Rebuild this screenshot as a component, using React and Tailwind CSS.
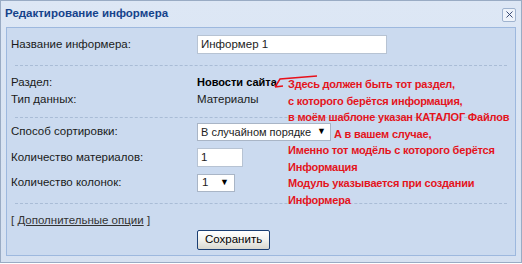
import { X } from "lucide-react";

const font = "font-['Tahoma','Liberation_Sans',sans-serif]";

const Dash = ({ className = "" }) => (
  <div className={`border-t border-dashed border-[#a9bcd6] mx-[4px] ${className}`} />
);

const Label = ({ children }) => (
  <div className="w-[186px] shrink-0 text-[11.5px] leading-none text-[#1a1a1a]">{children}</div>
);

const notes = [
  "Здесь должен быть тот раздел,",
  "с которого берётся информация,",
  "в моём шаблоне указан КАТАЛОГ Файлов",
  "",
  "Именно тот модёль с которого берётся",
  "Информация",
  "Модуль указывается при создании",
  "Информера",
];

export default function App() {
  return (
    <div className={`w-[522px] h-[263px] bg-white ${font}`}>
      <div className="h-[263px] border border-[#99abc4] bg-gradient-to-b from-[#dde7f5] via-[#d9e4f3] to-[#d6e1f1] flex flex-col">
        {/* header */}
        <div className="h-[26px] flex items-center justify-between pl-[4px] pr-[5px] pb-[1px]">
          <span className="text-[11.5px] font-bold text-[#15428b]">Редактирование информера</span>
          <span className="w-[14px] h-[14px] mt-[2px] rounded-[2px] border border-[#9fb3cf] bg-[#eef3fa] flex items-center justify-center">
            <X size={11} strokeWidth={2} className="text-[#2a3d6b]" />
          </span>
        </div>

        {/* panel */}
        <div className="relative mx-[5px] border border-[#9db8de] bg-[#cbdaef] pt-[7px] pb-[5px] px-[4px]">
          <div className="flex items-center h-[19px]">
            <Label>Название информера:</Label>
            <div className="w-[190px] h-[19px] bg-white border border-[#b7c3d3] px-[3px] text-[11.5px] flex items-center text-[#222]">
              Информер 1
            </div>
          </div>

          <Dash className="mt-[11px]" />

          <div className="mt-[8px] text-[11.5px] leading-[17px] text-[#1a1a1a]">
            <div className="flex h-[17px] items-center">
              <Label>Раздел:</Label>
              <span className="font-bold text-[11px] text-black">Новости сайта</span>
            </div>
            <div className="flex h-[17px] items-center">
              <Label>Тип данных:</Label>
              <span>Материалы</span>
            </div>
          </div>

          <Dash className="mt-[9px]" />

          <div className="mt-[5px] flex items-center h-[18px]">
            <Label>Способ сортировки:</Label>
            <div className="w-[134px] h-[18px] bg-white border border-[#a9b5c6] pl-[3px] pr-[4px] text-[11px] whitespace-nowrap flex items-center justify-between text-[#222]">
              <span>В случайном порядке</span>
              <span className="text-[9px] text-black">▼</span>
            </div>
          </div>
          <div className="mt-[7px] flex items-center h-[19px]">
            <Label>Количество материалов:</Label>
            <div className="w-[46px] h-[19px] bg-white border border-[#b7c3d3] px-[3px] text-[11.5px] flex items-center text-[#222]">
              1
            </div>
          </div>
          <div className="mt-[7px] flex items-center h-[18px]">
            <Label>Количество колонок:</Label>
            <div className="w-[38px] h-[18px] bg-white border border-[#a9b5c6] pl-[4px] pr-[5px] text-[11.5px] flex items-center justify-between text-[#222]">
              <span>1</span>
              <span className="text-[9px] text-black">▼</span>
            </div>
          </div>

          <Dash className="mt-[11px]" />

          <div className="mt-[9px] h-[14px] text-[11.5px] leading-[14px] text-[#333]">
            [ <span className="underline">Дополнительные опции</span> ]
          </div>

          <div className="mt-[3px] flex pl-[186px]">
            <button className="h-[20px] px-[7px] rounded-[2px] border border-[#1b3f73] bg-gradient-to-b from-white via-[#f2f2ee] to-[#d9d8d0] text-[11.5px] leading-none text-black">
              Сохранить
            </button>
          </div>

          {/* annotation over the form */}
          <svg className="absolute left-[266px] top-[45px]" width="50" height="16" viewBox="0 0 50 16">
            <path d="M2 14 L7 6 L44 3 M2 14 L10 13" stroke="#e8101a" strokeWidth="1.5" fill="none" />
          </svg>
          <div className="absolute left-[281px] top-[48px] whitespace-nowrap text-[11px] tracking-[-0.2px] font-bold leading-[16.5px] text-[#e4141c]">
            {notes.map((t, i) =>
              i === 3 ? (
                <div key={i} className="pl-[46px]">А в вашем случае,</div>
              ) : (
                <div key={i}>{t}</div>
              )
            )}
          </div>
        </div>
      </div>
    </div>
  );
}
